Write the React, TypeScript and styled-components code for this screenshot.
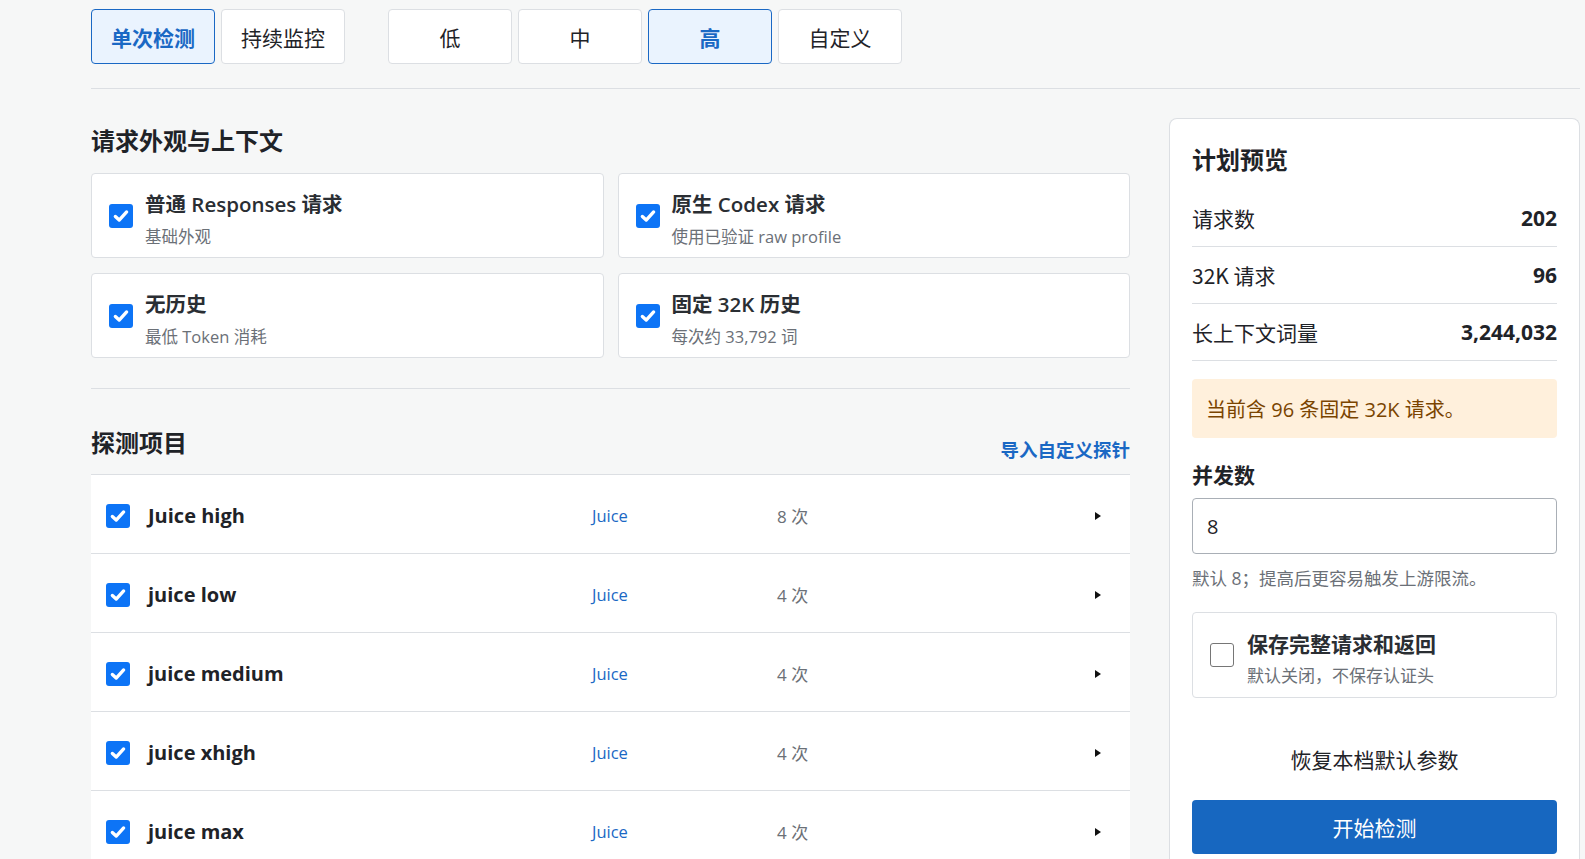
import styled, { createGlobalStyle } from 'styled-components';

const GlobalStyle = createGlobalStyle`
  html, body {
    margin: 0;
    padding: 0;
    overflow: hidden;
    background: #f6f7f7;
    font-family: 'Open Sans', 'Noto Sans CJK SC', sans-serif;
    color: #1f2328;
  }
  * { box-sizing: border-box; }
`;

const Page = styled.div`
  padding: 9px 5px 0 91px;
  height: 859px;
  overflow: hidden;
`;

const TopBar = styled.div`
  display: flex;
  gap: 43px;
  padding-bottom: 24px;
  border-bottom: 1px solid #dcdfe3;
`;

const Segment = styled.div`
  display: flex;
  gap: 6px;
`;

const SegButton = styled.button<{ active?: boolean }>`
  width: 124px;
  height: 55px;
  border-radius: 4px;
  border: 1px solid ${(p) => (p.active ? '#1a68c4' : '#dcdfe3')};
  background: ${(p) => (p.active ? '#eaf3fe' : '#fff')};
  color: ${(p) => (p.active ? '#1a68c4' : '#1f2328')};
  font-family: 'Noto Sans CJK SC', sans-serif;
  font-size: 21px;
  font-weight: ${(p) => (p.active ? 700 : 400)};
  cursor: pointer;
`;

const Body = styled.div`
  display: grid;
  grid-template-columns: minmax(0, 1fr) 411px;
  gap: 39px;
`;

const Main = styled.div``;

const SectionTitle = styled.h3`
  margin: 0;
  font-family: 'Noto Sans CJK SC', sans-serif;
  font-size: 24px;
  font-weight: 700;
  line-height: 30px;
  color: #1f2328;
`;

const AppearanceSection = styled.section`
  padding: 36px 0 30px;
  border-bottom: 1px solid #dcdfe3;
  display: flex;
  flex-direction: column;
  gap: 18px;
`;

const CardGrid = styled.div`
  display: grid;
  grid-template-columns: 1fr 1fr;
  gap: 15px 14px;
`;

const OptionCard = styled.label`
  display: flex;
  align-items: center;
  gap: 12px;
  height: 85px;
  padding: 0 17px;
  background: #fff;
  border: 1px solid #dcdfe3;
  border-radius: 4px;
`;

const OptionText = styled.div`
  display: flex;
  flex-direction: column;
  gap: 7px;
  padding-top: 5px;
`;

const OptionTitle = styled.div`
  font-size: 20.5px;
  font-weight: 600;
  line-height: 30px;
  color: #2a2e33;
`;

const OptionSub = styled.div`
  font-size: 16.5px;
  line-height: 22px;
  color: #6b7077;
`;

const Box = styled.span<{ checked?: boolean }>`
  flex: none;
  display: inline-flex;
  align-items: center;
  justify-content: center;
  width: 24px;
  height: 24px;
  border-radius: 3px;
  background: ${(p) => (p.checked ? '#0d74f6' : '#fff')};
  border: ${(p) => (p.checked ? 'none' : '1.5px solid #767676')};
`;

const Check = ({ checked = true }: { checked?: boolean }) => (
  <Box checked={checked}>
    {checked && (
      <svg width='18' height='18' viewBox='0 0 16 16'>
        <path d='M3 8.4 L6.4 11.6 L13 4.4' fill='none' stroke='#fff' strokeWidth='3' strokeLinecap='round' strokeLinejoin='round' />
      </svg>
    )}
  </Box>
);

const ProbeHeader = styled.div`
  display: flex;
  justify-content: space-between;
  align-items: flex-end;
  padding: 38px 0 10px;
`;

const ProbeTitle = styled(SectionTitle)`
  margin-bottom: 7px;
`;

const LinkButton = styled.a`
  font-family: 'Noto Sans CJK SC', sans-serif;
  font-size: 18.5px;
  font-weight: 700;
  line-height: 30px;
  color: #1a68c4;
  cursor: pointer;
`;

const ProbeList = styled.div`
  border-top: 1px solid #dcdfe3;
  background: #fff;
`;

const ProbeRow = styled.div`
  display: grid;
  grid-template-columns: 42px 444px 185px 1fr 35px;
  align-items: center;
  height: 79px;
  padding-left: 15px;
  padding-top: 3px;
  border-bottom: 1px solid #dcdfe3;
`;

const ProbeName = styled.span`
  font-size: 20px;
  font-weight: 700;
  color: #1f2328;
`;

const ProbeVendor = styled.span`
  font-size: 16.5px;
  color: #1a68c4;
`;

const ProbeCount = styled.span`
  font-size: 17px;
  color: #6b7077;
`;

const Caret = styled.span`
  width: 0;
  height: 0;
  border-top: 4px solid transparent;
  border-bottom: 4px solid transparent;
  border-left: 6px solid #111;
`;

const Side = styled.aside`
  margin-top: 29px;
  background: #fff;
  border: 1px solid #dcdfe3;
  border-radius: 8px 8px 0 0;
  border-bottom: none;
  padding: 25px 22px 0 22px;
  display: flex;
  flex-direction: column;
  height: 760px;
`;

const SideTitle = styled(SectionTitle)`
  margin-bottom: 16px;
`;

const StatRow = styled.div`
  display: flex;
  justify-content: space-between;
  align-items: center;
  height: 57px;
  border-bottom: 1px solid #dcdfe3;
  font-family: 'Noto Sans CJK SC', sans-serif;
  font-size: 21px;
  color: #1f2328;
`;

const StatValue = styled.span`
  font-family: 'Open Sans', sans-serif;
  font-weight: 700;
`;

const Notice = styled.div`
  margin-top: 18px;
  padding: 0 14px;
  height: 59px;
  display: flex;
  align-items: center;
  background: #fff0dc;
  border-radius: 4px;
  color: #7a4400;
  font-size: 20px;
`;

const FieldLabel = styled.div`
  margin-top: 22px;
  font-family: 'Noto Sans CJK SC', sans-serif;
  font-size: 21px;
  font-weight: 700;
  line-height: 28px;
`;

const NumberInput = styled.input`
  margin-top: 10px;
  height: 56px;
  width: 100%;
  padding: 0 14px;
  border: 1px solid #a9afb6;
  border-radius: 4px;
  font-family: 'Open Sans', sans-serif;
  font-size: 20px;
  color: #1f2328;
  background: #fff;
`;

const Hint = styled.div`
  margin-top: 12px;
  font-size: 17.5px;
  line-height: 24px;
  color: #6b7077;
`;

const SaveCard = styled(OptionCard)`
  margin-top: 22px;
  height: 86px;
  gap: 13px;
`;

const SaveText = styled(OptionText)`
  gap: 6px;
`;

const SaveTitle = styled.div`
  font-family: 'Noto Sans CJK SC', sans-serif;
  font-size: 21px;
  font-weight: 700;
  line-height: 30px;
  color: #2a2e33;
`;

const SaveSub = styled.div`
  font-size: 17px;
  line-height: 24px;
  color: #6b7077;
`;

const GhostButton = styled.button`
  margin-top: 36px;
  height: 50px;
  border: none;
  background: transparent;
  font-family: 'Noto Sans CJK SC', sans-serif;
  font-size: 21px;
  color: #1f2328;
  cursor: pointer;
`;

const PrimaryButton = styled.button`
  margin-top: 16px;
  height: 54px;
  border: none;
  border-radius: 4px;
  background: #1767c0;
  color: #fff;
  font-family: 'Noto Sans CJK SC', sans-serif;
  font-size: 21px;
  cursor: pointer;
`;

const options = [
  { title: '普通 Responses 请求', sub: '基础外观' },
  { title: '原生 Codex 请求', sub: '使用已验证 raw profile' },
  { title: '无历史', sub: '最低 Token 消耗' },
  { title: '固定 32K 历史', sub: '每次约 33,792 词' },
];

const probes = [
  { name: 'Juice high', count: 8 },
  { name: 'juice low', count: 4 },
  { name: 'juice medium', count: 4 },
  { name: 'juice xhigh', count: 4 },
  { name: 'juice max', count: 4 },
];

const stats = [
  { label: '请求数', value: '202' },
  { label: '32K 请求', value: '96' },
  { label: '长上下文词量', value: '3,244,032' },
];

const App = () => {
  return (
    <>
      <GlobalStyle />
      <Page>
        <TopBar>
          <Segment>
            <SegButton active>单次检测</SegButton>
            <SegButton>持续监控</SegButton>
          </Segment>
          <Segment>
            <SegButton>低</SegButton>
            <SegButton>中</SegButton>
            <SegButton active>高</SegButton>
            <SegButton>自定义</SegButton>
          </Segment>
        </TopBar>
        <Body>
          <Main>
            <AppearanceSection>
              <SectionTitle>请求外观与上下文</SectionTitle>
              <CardGrid>
                {options.map((o) => (
                  <OptionCard key={o.title}>
                    <Check />
                    <OptionText>
                      <OptionTitle>{o.title}</OptionTitle>
                      <OptionSub>{o.sub}</OptionSub>
                    </OptionText>
                  </OptionCard>
                ))}
              </CardGrid>
            </AppearanceSection>
            <ProbeHeader>
              <ProbeTitle>探测项目</ProbeTitle>
              <LinkButton>导入自定义探针</LinkButton>
            </ProbeHeader>
            <ProbeList>
              {probes.map((p) => (
                <ProbeRow key={p.name}>
                  <Check />
                  <ProbeName>{p.name}</ProbeName>
                  <ProbeVendor>Juice</ProbeVendor>
                  <ProbeCount>{p.count} 次</ProbeCount>
                  <Caret />
                </ProbeRow>
              ))}
            </ProbeList>
          </Main>
          <Side>
            <SideTitle>计划预览</SideTitle>
            {stats.map((s) => (
              <StatRow key={s.label}>
                <span>{s.label}</span>
                <StatValue>{s.value}</StatValue>
              </StatRow>
            ))}
            <Notice>当前含 96 条固定 32K 请求。</Notice>
            <FieldLabel>并发数</FieldLabel>
            <NumberInput defaultValue='8' />
            <Hint>默认 8；提高后更容易触发上游限流。</Hint>
            <SaveCard>
              <Check checked={false} />
              <SaveText>
                <SaveTitle>保存完整请求和返回</SaveTitle>
                <SaveSub>默认关闭，不保存认证头</SaveSub>
              </SaveText>
            </SaveCard>
            <GhostButton>恢复本档默认参数</GhostButton>
            <PrimaryButton>开始检测</PrimaryButton>
          </Side>
        </Body>
      </Page>
    </>
  );
};

export default App;
